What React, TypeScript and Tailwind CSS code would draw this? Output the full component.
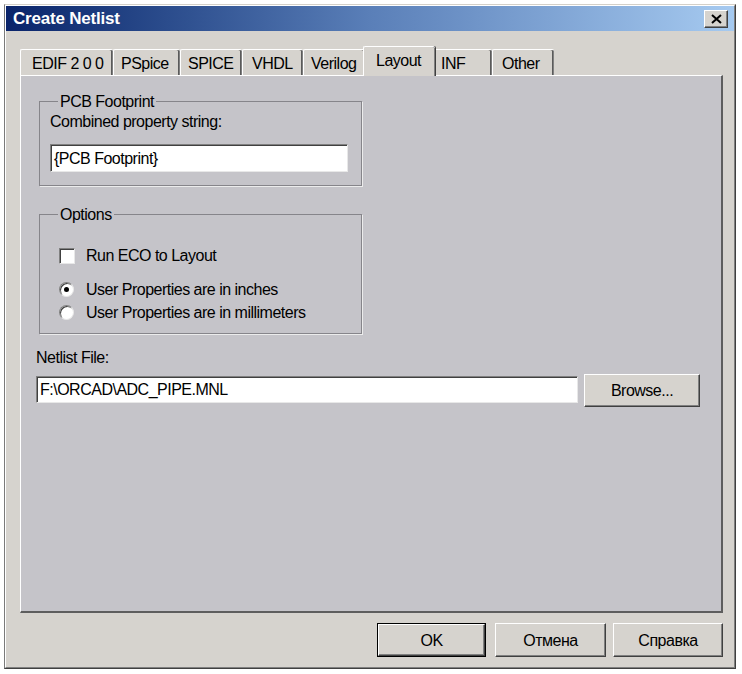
import React from "react";

function Tab({ label, w, pl = 7, selected = false }: { label: string; w: number; pl?: number; selected?: boolean }) {
  if (selected) {
    return (
      <div
        className="relative z-10 -ml-[2px] -mr-[2px] h-[30px] -mb-[1px] flex items-start pt-[5px] whitespace-nowrap bg-[#d6d3ce] border-l border-t border-white rounded-tl-[2px] rounded-tr-[2px] shadow-[inset_-1px_0_0_#808080,1px_0_0_#404040]"
        style={{ width: w + 4, paddingLeft: pl }}
      >
        {label}
      </div>
    );
  }
  return (
    <div
      className="h-[26px] flex items-start pt-[5px] whitespace-nowrap bg-[#d6d3ce] border-l border-t border-white rounded-tl-[2px] rounded-tr-[2px] shadow-[inset_-1px_0_0_#808080,inset_-2px_0_0_#5a5a5a]"
      style={{ width: w, paddingLeft: pl }}
    >
      {label}
    </div>
  );
}

function Button({ label, w, h, isDefault = false }: { label: string; w: number; h: number; isDefault?: boolean }) {
  const inner = (
    <div className="w-full h-full flex items-center justify-center bg-[#d6d3ce] border-l border-t border-white border-r border-b border-r-[#404040] border-b-[#404040] shadow-[inset_-1px_-1px_0_#808080]">
      {label}
    </div>
  );
  if (isDefault) {
    return (
      <div className="border border-black shrink-0" style={{ width: w, height: h }}>
        {inner}
      </div>
    );
  }
  return (
    <div className="shrink-0" style={{ width: w, height: h }}>
      {inner}
    </div>
  );
}

function TextInput({ value, w, h }: { value: string; w: number; h: number }) {
  return (
    <div
      className="bg-white flex items-center pl-[3px] border-l border-t border-[#808080] border-r border-b border-r-[#e8e8e8] border-b-[#e8e8e8] shadow-[inset_1px_1px_0_#404040] shrink-0"
      style={{ width: w, height: h }}
    >
      {value}
    </div>
  );
}

function Radio({ checked }: { checked: boolean }) {
  return (
    <div className="w-[15px] h-[15px] rounded-full bg-white border border-t-[#808080] border-l-[#808080] border-r-[#e8e8e8] border-b-[#e8e8e8] shadow-[inset_1px_1px_0_#404040] flex items-center justify-center shrink-0">
      {checked && <div className="w-[5px] h-[5px] rounded-full bg-black" />}
    </div>
  );
}

export default function App() {
  return (
    <div className="w-[742px] h-[674px] bg-white overflow-hidden pt-[4px] pl-[4px] font-['Liberation_Sans',Arial,sans-serif] text-[16px] tracking-[-0.5px] leading-[17px] text-black">
      <div className="w-[732px] h-[665px] border border-t-[#d4d0c8] border-l-[#7a7a7a] border-r-[#404040] border-b-[#404040]">
        <div className="h-full border border-t-white border-l-white border-r-[#808080] border-b-[#808080] bg-[#d6d3ce] flex flex-col">
          {/* Title bar */}
          <div className="h-[25px] shrink-0 flex items-center justify-between bg-gradient-to-r from-[#0a246a] via-[#5a7fb8] to-[#a6caf0] pl-[7px] pr-[6px]">
            <span className="text-white font-bold text-[17px] leading-[20px] tracking-[-0.2px]">Create Netlist</span>
            <div className="w-[24px] h-[18px] bg-[#d6d3ce] border-l border-t border-white border-r border-b border-r-[#404040] border-b-[#404040] shadow-[inset_-1px_-1px_0_#808080] flex items-center justify-center">
              <svg width="11" height="10" viewBox="0 0 11 10">
                <path d="M1 1 L10 9 M10 1 L1 9" stroke="#000" strokeWidth="2" fill="none" />
              </svg>
            </div>
          </div>

          {/* Body */}
          <div className="pl-[14px] pt-[15px]">
            {/* Tabs */}
            <div className="flex items-end h-[29px]">
              <Tab label="EDIF 2 0 0" w={93} pl={11} />
              <Tab label="PSpice" w={67} pl={7} />
              <Tab label="SPICE" w={62} pl={7} />
              <Tab label="VHDL" w={61} pl={9} />
              <Tab label="Verilog" w={62} pl={7} />
              <Tab label="Layout" w={68} pl={12} selected />
              <Tab label="INF" w={59} pl={7} />
              <Tab label="Other" w={62} pl={9} />
            </div>

            {/* Panel */}
            <div className="w-[703px] h-[538px] bg-[#c5c4c9] border-l border-t border-white border-r-2 border-b-2 border-r-[#5e5e5e] border-b-[#5e5e5e] pl-[15px] flex flex-col">
              <fieldset className="mt-[17px] ml-[3px] w-[323px] border border-[#86858a] pl-[10px] pb-[13px] shadow-[1px_1px_0_#ececec]">
                <legend className="ml-[8px] px-[2px]">PCB Footprint</legend>
                <div className="mt-[3px]">Combined property string:</div>
                <div className="mt-[14px]">
                  <TextInput value="{PCB Footprint}" w={298} h={28} />
                </div>
              </fieldset>

              <fieldset className="mt-[20px] ml-[3px] w-[323px] border border-[#86858a] pl-[19px] pb-[12px] shadow-[1px_1px_0_#ececec]">
                <legend className="ml-[-1px] px-[2px]">Options</legend>
                <div className="mt-[24px] flex items-center h-[17px] gap-[11px]">
                  <div className="w-[16px] h-[16px] bg-white border border-t-[#808080] border-l-[#808080] border-r-[#e8e8e8] border-b-[#e8e8e8] shadow-[inset_1px_1px_0_#404040] shrink-0" />
                  <span>Run ECO to Layout</span>
                </div>
                <div className="mt-[16px] flex items-center h-[18px] gap-[12px]">
                  <Radio checked />
                  <span>User Properties are in inches</span>
                </div>
                <div className="mt-[5px] flex items-center h-[18px] gap-[12px]">
                  <Radio checked={false} />
                  <span>User Properties are in millimeters</span>
                </div>
              </fieldset>

              <div className="mt-[15px]">Netlist File:</div>
              <div className="mt-[8px] flex items-start">
                <div className="mt-[2px]">
                  <TextInput value="F:\ORCAD\ADC_PIPE.MNL" w={542} h={27} />
                </div>
                <div className="ml-[6px]">
                  <Button label="Browse..." w={116} h={33} />
                </div>
              </div>
            </div>

            {/* Bottom buttons */}
            <div className="w-[703px] mt-[10px] flex justify-end items-center">
              <Button label="OK" w={109} h={34} isDefault />
              <div className="ml-[9px]">
                <Button label="Отмена" w={111} h={34} />
              </div>
              <div className="ml-[7px]">
                <Button label="Справка" w={110} h={34} />
              </div>
            </div>
          </div>
        </div>
      </div>
    </div>
  );
}
